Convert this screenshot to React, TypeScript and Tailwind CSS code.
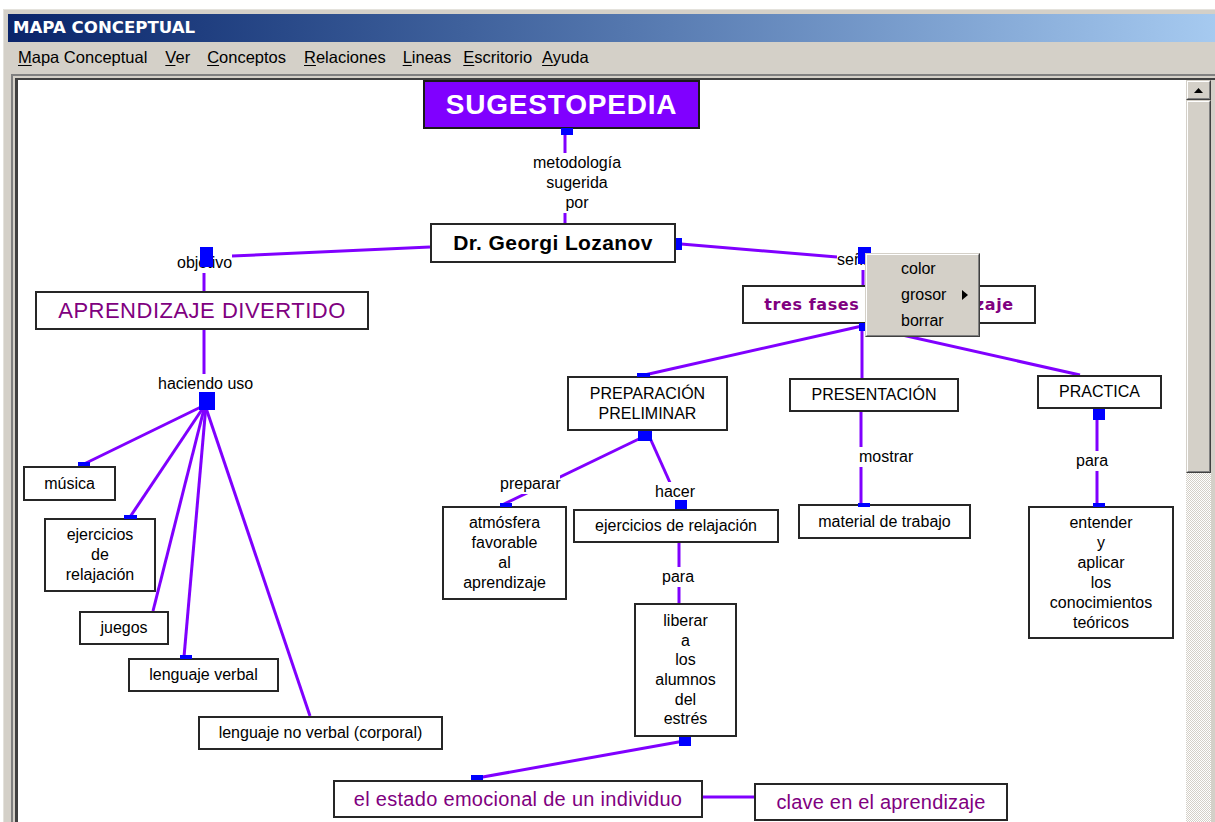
import type { ReactNode } from 'react';

// screen coordinates; the canvas starts at (18, 80)
const lines: [number, number, number, number][] = [
  [565, 134, 565, 224],
  [681, 244, 837, 257],
  [430, 247, 232, 256],
  [204, 268, 204, 291],
  [204, 330, 204, 376],
  [205, 405, 84, 464],
  [205, 405, 130, 517],
  [205, 405, 153, 611],
  [206, 405, 184, 657],
  [205, 405, 310, 716],
  [863, 262, 863, 286],
  [862, 324, 862, 378],
  [862, 326, 640, 376],
  [862, 326, 1080, 375],
  [645, 436, 502, 505],
  [650, 438, 680, 505],
  [679, 543, 679, 603],
  [684, 741, 477, 778],
  [703, 797, 754, 797],
  [861, 412, 861, 505],
  [1097, 415, 1097, 506],
];

const squares: [number, number, number, number][] = [
  [561, 128, 573, 135],
  [676, 238, 682, 250],
  [200, 247, 213, 267],
  [199, 392, 215, 410],
  [78, 462, 90, 466],
  [124, 515, 137, 519],
  [180, 655, 192, 659],
  [858, 247, 871, 264],
  [859, 323, 871, 331],
  [637, 373, 650, 377],
  [638, 431, 652, 441],
  [500, 503, 512, 507],
  [675, 500, 687, 509],
  [679, 737, 691, 746],
  [471, 775, 483, 780],
  [858, 503, 870, 507],
  [1093, 409, 1105, 420],
  [1093, 503, 1105, 507],
];

function Node({
  className,
  text = 'text-[16px] leading-[20px] text-black',
  children,
}: {
  className: string;
  text?: string;
  children: ReactNode;
}) {
  return (
    <div
      className={`absolute flex flex-col items-center justify-center border-2 border-[#262626] bg-white text-center ${text} ${className}`}
    >
      {children}
    </div>
  );
}

function Label({ className, children }: { className: string; children: ReactNode }) {
  return <div className={`absolute bg-white text-[16px] leading-[20px] text-black ${className}`}>{children}</div>;
}

function MenuItem({ first, rest, className = '' }: { first: string; rest: string; className?: string }) {
  return (
    <span className={className}>
      <span className="underline underline-offset-2">{first}</span>
      {rest}
    </span>
  );
}

const purple = "text-[#800080]";

export default function App() {
  return (
    <div className="h-[822px] w-[1215px] overflow-hidden bg-white pl-[3px] pt-[9px] font-['Liberation_Sans',Arial,sans-serif]">
      <div className="w-[1230px] border-l border-t border-[#e4e2dc] bg-[#d4d0c8] pl-[4px] pt-[4px]">
        <div className="flex h-[28px] w-[1207px] items-center bg-linear-to-r from-[#0a246a] to-[#a6caf0] pl-[5px] font-['DejaVu_Sans',sans-serif] text-[16.6px] font-bold text-white">
          MAPA CONCEPTUAL
        </div>

        <div className="flex h-[31px] items-center pl-[10px] text-[16.5px] text-black">
          <MenuItem first="M" rest="apa Conceptual" />
          <MenuItem first="V" rest="er" className="ml-[18px]" />
          <MenuItem first="C" rest="onceptos" className="ml-[17px]" />
          <MenuItem first="R" rest="elaciones" className="ml-[18px]" />
          <MenuItem first="L" rest="ineas" className="ml-[17px]" />
          <MenuItem first="E" rest="scritorio" className="ml-[12px]" />
          <MenuItem first="A" rest="yuda" className="ml-[10px]" />
        </div>

        <div className="ml-[3px] mt-[1px] border-l-2 border-t-2 border-[#808080] pl-[2px] pt-[2px]">
          <div className="flex border-l-[3px] border-t-2 border-[#404040]">
            <div className="relative h-[742px] w-[1168px] shrink-0 overflow-hidden bg-white">
              <svg className="pointer-events-none absolute inset-0" width="1168" height="742">
                <g transform="translate(-18 -80)" stroke="#8000ff" strokeWidth="3" fill="none">
                  {lines.map(([x1, y1, x2, y2], i) => (
                    <line key={i} x1={x1} y1={y1} x2={x2} y2={y2} />
                  ))}
                </g>
              </svg>

              <div className="absolute left-[405px] top-0 flex h-[49px] w-[277px] items-center justify-center border-2 border-[#1a1a1a] bg-[#8000ff] text-[28px] font-bold tracking-[0.8px] text-white">
                SUGESTOPEDIA
              </div>

              <Label className="left-[512px] top-[73px] w-[94px] text-center">
                metodología
                <br />
                sugerida
                <br />
                por
              </Label>

              <Node
                className="left-[412px] top-[143px] h-[40px] w-[246px]"
                text="text-[21px] font-bold tracking-[0.4px] text-black"
              >
                Dr. Georgi Lozanov
              </Node>

              <Label className="left-[159px] top-[173px]">objetivo</Label>
              <Label className="left-[819px] top-[170px]">señala</Label>

              <Node
                className="left-[17px] top-[211px] h-[39px] w-[334px]"
                text={`text-[22px] tracking-[0.5px] ${purple}`}
              >
                APRENDIZAJE DIVERTIDO
              </Node>

              <Label className="left-[140px] top-[294px]">haciendo uso</Label>

              <Node className="left-[5px] top-[386px] h-[35px] w-[93px]">música</Node>
              <Node className="left-[26px] top-[438px] h-[74px] w-[112px]">
                <span>ejercicios</span>
                <span>de</span>
                <span>relajación</span>
              </Node>
              <Node className="left-[61px] top-[531px] h-[34px] w-[90px]">juegos</Node>
              <Node className="left-[110px] top-[578px] h-[34px] w-[151px]">lenguaje verbal</Node>
              <Node className="left-[180px] top-[636px] h-[34px] w-[245px]">lenguaje no verbal (corporal)</Node>

              <Node
                className="left-[724px] top-[205px] h-[39px] w-[294px]"
                text={`font-['DejaVu_Sans',sans-serif] text-[16px] font-bold tracking-[0.6px] ${purple}`}
              >
                tres fases del aprendizaje
              </Node>

              <Node className="left-[549px] top-[296px] h-[55px] w-[161px]">
                <span>PREPARACIÓN</span>
                <span>PRELIMINAR</span>
              </Node>
              <Node className="left-[771px] top-[298px] h-[34px] w-[170px]">PRESENTACIÓN</Node>
              <Node className="left-[1019px] top-[295px] h-[34px] w-[125px]">PRACTICA</Node>

              <Label className="left-[482px] top-[394px]">preparar</Label>
              <Label className="left-[637px] top-[402px]">hacer</Label>
              <Label className="left-[841px] top-[367px]">mostrar</Label>
              <Label className="left-[1058px] top-[371px]">para</Label>

              <Node className="left-[424px] top-[426px] h-[94px] w-[125px]">
                <span>atmósfera</span>
                <span>favorable</span>
                <span>al</span>
                <span>aprendizaje</span>
              </Node>
              <Node className="left-[555px] top-[429px] h-[34px] w-[206px]">ejercicios de relajación</Node>
              <Node className="left-[780px] top-[424px] h-[35px] w-[173px]">material de trabajo</Node>
              <Node className="left-[1010px] top-[426px] h-[133px] w-[146px]">
                <span>entender</span>
                <span>y</span>
                <span>aplicar</span>
                <span>los</span>
                <span>conocimientos</span>
                <span>teóricos</span>
              </Node>

              <Label className="left-[644px] top-[487px]">para</Label>

              <Node className="left-[616px] top-[523px] h-[134px] w-[103px]" text="text-[16px] leading-[19.6px] text-black">
                <span>liberar</span>
                <span>a</span>
                <span>los</span>
                <span>alumnos</span>
                <span>del</span>
                <span>estrés</span>
              </Node>

              <Node
                className="left-[315px] top-[700px] h-[38px] w-[370px]"
                text={`text-[20px] tracking-[0.3px] ${purple}`}
              >
                el estado emocional de un individuo
              </Node>
              <Node
                className="left-[736px] top-[703px] h-[38px] w-[254px]"
                text={`text-[20px] tracking-[0.2px] ${purple}`}
              >
                clave en el aprendizaje
              </Node>

              <svg className="pointer-events-none absolute inset-0" width="1168" height="742">
                <g transform="translate(-18 -80)" fill="#0000ff">
                  {squares.map(([x1, y1, x2, y2], i) => (
                    <rect key={i} x={x1} y={y1} width={x2 - x1} height={y2 - y1} />
                  ))}
                </g>
              </svg>

              <div className="absolute left-[847px] top-[173px] w-[115px] border border-t-[#d4d0c8] border-l-[#d4d0c8] border-b-[#404040] border-r-[#404040] bg-[#d4d0c8]">
                <div className="border border-t-white border-l-white border-b-[#808080] border-r-[#808080] py-[1px] text-[16px] text-black">
                  <div className="flex h-[26px] items-center pl-[34px]">color</div>
                  <div className="relative flex h-[26px] items-center pl-[34px]">
                    grosor
                    <svg className="absolute left-[95px] top-[8px]" width="6" height="10" viewBox="0 0 6 10">
                      <path d="M0 0 L6 5 L0 10 Z" fill="#000" />
                    </svg>
                  </div>
                  <div className="flex h-[26px] items-center pl-[34px]">borrar</div>
                </div>
              </div>
            </div>

            <div className="flex h-[742px] w-[25px] shrink-0 flex-col">
              <div className="h-[20px] border border-t-[#d4d0c8] border-l-[#d4d0c8] border-b-[#404040] border-r-[#404040] bg-[#d4d0c8]">
                <div className="flex h-full items-center justify-center border border-t-white border-l-white border-b-[#808080] border-r-[#808080]">
                  <svg width="9" height="5" viewBox="0 0 9 5">
                    <path d="M4.5 0 L9 5 L0 5 Z" fill="#000" />
                  </svg>
                </div>
              </div>
              <div className="h-[373px] border border-t-[#d4d0c8] border-l-[#d4d0c8] border-b-[#404040] border-r-[#404040] bg-[#d4d0c8]">
                <div className="h-full border border-t-white border-l-white border-b-[#808080] border-r-[#808080]" />
              </div>
              <div className="flex-1 bg-[repeating-conic-gradient(#d4d0c8_0%_25%,#ffffff_0%_50%)] bg-[length:2px_2px]" />
            </div>
          </div>
        </div>
      </div>
    </div>
  );
}
